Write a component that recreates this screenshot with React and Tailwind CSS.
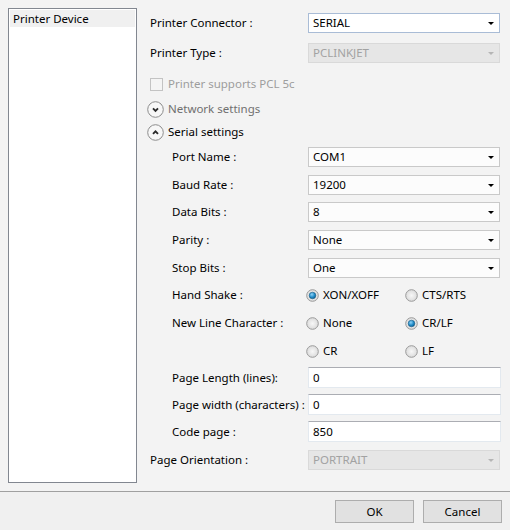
import React from "react";

const font = { fontFamily: '"Noto Sans", "Segoe UI", sans-serif' };

/* small triangle used by every combo box */
const Arrow = ({ disabled }) => (
  <svg width="6" height="3" viewBox="0 0 6 3" className="mr-[5px]">
    <path d="M0 0 H6 L3 3 Z" fill={disabled ? "#b5b5b5" : "#000"} />
  </svg>
);

const Combo = ({ value, disabled, focused }) => (
  <div
    className={`w-[192px] h-[20px] flex items-center justify-between border pl-[4px] ${
      disabled
        ? "bg-[#e6e6e6] border-[#d9d9d9] text-[#a2a2a2]"
        : focused
        ? "bg-white border-[#a9bcd6] text-black"
        : "bg-[#fcfcfc] border-[#c9c9c9] text-black"
    }`}
  >
    <span>{value}</span>
    <Arrow disabled={disabled} />
  </div>
);

const TextBox = ({ value }) => (
  <div className="w-[193px] h-[21px] flex items-center bg-white border border-[#e3e9ef] border-t-[#abadb3] pl-[4px]">
    {value}
  </div>
);

const Radio = ({ checked, label }) => (
  <div className="flex items-center gap-[4px]">
    <svg width="13" height="13" viewBox="0 0 13 13">
      <defs>
        <radialGradient id="rb" cx="0.5" cy="0.5" r="0.6">
          <stop offset="0" stopColor="#f7f7f7" />
          <stop offset="1" stopColor="#d6d6d6" />
        </radialGradient>
        <radialGradient id="rd" cx="0.4" cy="0.35" r="0.7">
          <stop offset="0" stopColor="#8fd3f7" />
          <stop offset="0.6" stopColor="#1f8ac6" />
          <stop offset="1" stopColor="#0b5b8c" />
        </radialGradient>
      </defs>
      <circle cx="6.5" cy="6.5" r="5.8" fill="url(#rb)" stroke="#9a9a9a" strokeWidth="1" />
      {checked && <circle cx="6.5" cy="6.5" r="3.3" fill="url(#rd)" stroke="#1b5d85" strokeWidth="0.6" />}
    </svg>
    <span>{label}</span>
  </div>
);

const Expander = ({ open }) => (
  <svg width="17" height="17" viewBox="0 0 17 17">
    <circle cx="8.5" cy="8.5" r="7.8" fill="#f7f7f7" stroke="#8c8c8c" strokeWidth="1" />
    <path
      d={open ? "M6 9.8 L8.5 7.3 L11 9.8" : "M6 7.4 L8.5 9.9 L11 7.4"}
      fill="none"
      stroke="#2a2a2a"
      strokeWidth="1.9"
    />
  </svg>
);

const Row = ({ className = "", indent, label, children }) => (
  <div className={`flex items-center ${className}`}>
    <div className={`whitespace-nowrap ${indent ? "w-[158px] pl-[22px]" : "w-[158px]"}`}>{label}</div>
    {children}
  </div>
);

export default function App() {
  return (
    <div className="w-[510px] h-[530px] flex flex-col text-[11.5px] text-black bg-[#f3f3f3]" style={font}>
      {/* main area */}
      <div className="flex h-[491px] pt-[8px] pl-[8px]">
        <div className="w-[129px] h-[475px] border border-[#828790] bg-white p-[1px]">
          <div className="h-[17px] bg-[#f0f0f0] flex items-center pl-[3px] leading-none">Printer Device</div>
        </div>

        <div className="flex flex-col pl-[13px] pt-[5px]">
          <Row label="Printer Connector  :" className="h-[20px]">
            <Combo value="SERIAL" focused />
          </Row>
          <Row label="Printer Type :" className="h-[20px] mt-[10px]">
            <Combo value="PCLINKJET" disabled />
          </Row>

          <div className="h-[20px] mt-[11px] flex items-center gap-[5px] text-[#9d9d9d]">
            <div className="w-[13px] h-[13px] border border-[#c3c3c3] bg-[#f4f4f4]" />
            <span>Printer supports PCL 5c</span>
          </div>

          <div className="h-[20px] mt-[5px] -ml-[3px] flex items-center gap-[4px] text-[#6f6f6f]">
            <Expander />
            <span>Network settings</span>
          </div>
          <div className="h-[20px] mt-[3px] -ml-[3px] flex items-center gap-[4px]">
            <Expander open />
            <span>Serial settings</span>
          </div>

          <Row indent label="Port Name :" className="h-[20px] mt-[5px]">
            <Combo value="COM1" />
          </Row>
          <Row indent label="Baud Rate :" className="h-[20px] mt-[8px]">
            <Combo value="19200" />
          </Row>
          <Row indent label="Data Bits :" className="h-[20px] mt-[7px]">
            <Combo value="8" />
          </Row>
          <Row indent label="Parity :" className="h-[20px] mt-[8px]">
            <Combo value="None" />
          </Row>
          <Row indent label="Stop Bits :" className="h-[20px] mt-[8px]">
            <Combo value="One" />
          </Row>

          <Row indent label="Hand Shake :" className="h-[20px] mt-[7px]">
            <div className="w-[99px] -ml-[2px]">
              <Radio checked label="XON/XOFF" />
            </div>
            <Radio label="CTS/RTS" />
          </Row>
          <Row indent label="New Line Character :" className="h-[20px] mt-[8px]">
            <div className="w-[99px] -ml-[2px]">
              <Radio label="None" />
            </div>
            <Radio checked label="CR/LF" />
          </Row>
          <Row indent label="" className="h-[20px] mt-[8px]">
            <div className="w-[99px] -ml-[2px]">
              <Radio label="CR" />
            </div>
            <Radio label="LF" />
          </Row>

          <Row indent label="Page Length (lines):" className="h-[21px] mt-[6px]">
            <TextBox value="0" />
          </Row>
          <Row indent label="Page width (characters) :" className="h-[21px] mt-[6px]">
            <TextBox value="0" />
          </Row>
          <Row indent label="Code page :" className="h-[21px] mt-[6px]">
            <TextBox value="850" />
          </Row>

          <Row label="Page Orientation :" className="h-[20px] mt-[8px]">
            <Combo value="PORTRAIT" disabled />
          </Row>
        </div>
      </div>

      {/* footer */}
      <div className="flex-1 border-t border-[#a0a0a0] bg-[#f0f0f0] flex justify-end items-start pt-[8px] pr-[8px] gap-[9px]">
        <button className="w-[79px] h-[23px] bg-[#e1e1e1] border border-[#adadad]">OK</button>
        <button className="w-[79px] h-[23px] bg-[#e1e1e1] border border-[#adadad]">Cancel</button>
      </div>
    </div>
  );
}
